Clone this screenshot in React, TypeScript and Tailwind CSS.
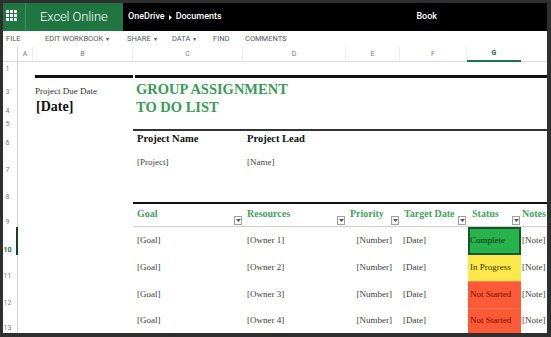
const SERIF = "font-['Liberation_Serif','Times_New_Roman',serif]"
const UI = "font-['Roboto','Open_Sans',sans-serif]"

// Excel row number -> grid row (grid row 1 holds the column letters)
const ROW: Record<number, string> = {
  1: 'row-start-2',
  2: 'row-start-3',
  3: 'row-start-4',
  4: 'row-start-5',
  5: 'row-start-6',
  6: 'row-start-7',
  7: 'row-start-8',
  8: 'row-start-9',
  9: 'row-start-10',
  10: 'row-start-11',
  11: 'row-start-12',
  12: 'row-start-13',
  13: 'row-start-14',
}

const COLS = [
  { key: 'A', cls: 'col-start-2' },
  { key: 'B', cls: 'col-start-3' },
  { key: 'C', cls: 'col-start-4' },
  { key: 'D', cls: 'col-start-5' },
  { key: 'E', cls: 'col-start-6' },
  { key: 'F', cls: 'col-start-7' },
  { key: 'G', cls: 'col-start-8' },
]

const MENU = [
  { label: 'FILE', w: 'w-[39px]' },
  { label: 'EDIT WORKBOOK', caret: true, w: 'w-[82px]' },
  { label: 'SHARE', caret: true, w: 'w-[45px]' },
  { label: 'DATA', caret: true, w: 'w-[41px]' },
  { label: 'FIND', w: 'w-[32px]' },
  { label: 'COMMENTS', w: 'w-[60px]' },
]

const HEADERS = [
  { label: 'Goal', cls: 'col-start-4 pl-[4px]', filter: true },
  { label: 'Resources', cls: 'col-start-5 pl-[4px]', filter: true },
  { label: 'Priority', cls: 'col-start-6 pl-[4px]', filter: true },
  { label: 'Target Date', cls: 'col-start-7 pl-[4px]', filter: true },
  { label: 'Status', cls: 'col-start-8 pl-[5px]', filter: true },
  { label: 'Notes', cls: 'col-start-9 pl-[1px]', filter: false },
]

type Status = 'Complete' | 'In Progress' | 'Not Started'

const TASKS: { row: number; owner: string; status: Status }[] = [
  { row: 10, owner: '[Owner 1]', status: 'Complete' },
  { row: 11, owner: '[Owner 2]', status: 'In Progress' },
  { row: 12, owner: '[Owner 3]', status: 'Not Started' },
  { row: 13, owner: '[Owner 4]', status: 'Not Started' },
]

const STATUS_CLS: Record<Status, string> = {
  Complete: 'bg-[#27b24b] text-[#0c2a12] border-2 border-[#17552b]',
  'In Progress': 'bg-[#fde84b] text-[#3d3300] pl-[2px]',
  'Not Started': 'bg-[#ff5a37] text-[#6e0e00] pl-[2px] border-t border-[#ff7b5e]',
}

function Waffle() {
  return (
    <svg width="11" height="11" viewBox="0 0 11 11" fill="#fff">
      {[0, 4, 8].flatMap((y) =>
        [0, 4, 8].map((x) => <rect key={`${x}-${y}`} x={x} y={y} width="3" height="3" />),
      )}
    </svg>
  )
}

function Filter() {
  return (
    <span className="mb-[2px] mr-[1px] flex h-[9px] w-[8px] shrink-0 items-center justify-center self-end border border-[#a0a0a0] bg-white">
      <svg width="5" height="3" viewBox="0 0 5 3">
        <path d="M0 0h5L2.5 3z" fill="#555" />
      </svg>
    </span>
  )
}

function TopBar() {
  return (
    <div className={`flex h-[28px] shrink-0 ${UI}`}>
      <div className="flex w-[120px] bg-[#1f7641]">
        <div className="flex w-[23px] border-r border-[#3f8f5c] pl-[3px] pt-[7px]">
          <Waffle />
        </div>
        <div className="flex items-center pl-[14px] text-[13px] font-light tracking-[-0.1px] text-white">
          Excel Online
        </div>
      </div>
      <div className="flex flex-1 items-center bg-black pl-[5px] text-[9px] font-medium text-white">
        <span>OneDrive</span>
        <svg className="mx-[4px]" width="3" height="5" viewBox="0 0 3 5">
          <path d="M0 0l3 2.5L0 5z" fill="#fff" />
        </svg>
        <span>Documents</span>
        <span className="ml-auto mr-[110px]">Book</span>
      </div>
    </div>
  )
}

function Ribbon() {
  return (
    <div className={`flex h-[16px] shrink-0 items-center pl-[3px] text-[7.5px] text-[#555] ${UI}`}>
      {MENU.map((m) => (
        <span key={m.label} className={`${m.w} shrink-0 whitespace-nowrap`}>
          {m.label}
          {m.caret && <span className="ml-[3px] text-[6px]">▾</span>}
        </span>
      ))}
    </div>
  )
}

function Sheet() {
  return (
    <div className="grid flex-1 grid-cols-[15px_15px_100px_110px_103px_54px_67px_54px_1fr] grid-rows-[15px_12px_6px_17px_19px_13px_19px_27px_27px_25px_28px_26px_27px_25px]">
      {/* column letters */}
      <div className="col-start-1 row-start-1 border-b border-r border-[#d9d9d9]" />
      {COLS.map((c) => {
        const sel = c.key === 'G'
        return (
          <div
            key={c.key}
            className={`${c.cls} row-start-1 flex items-center justify-center ${UI} text-[7px] ${
              sel
                ? 'border-b-2 border-[#217346] font-bold text-[#1d5e33]'
                : 'border-b border-r border-b-[#dcdcdc] border-r-[#eeeeee] text-[#777]'
            }`}
          >
            {c.key}
          </div>
        )
      })}
      <div className="col-start-9 row-start-1 border-b border-[#dcdcdc]" />

      {/* row numbers */}
      {Array.from({ length: 13 }, (_, i) => i + 1).map((n) => {
        const sel = n === 10
        return (
          <div
            key={n}
            className={`col-start-1 ${ROW[n]} flex items-end overflow-hidden pb-[1px] ${UI} ${
              sel ? 'border-r-2 border-[#17412a]' : 'border-r border-[#d0d0d0]'
            }`}
          >
            {n !== 2 && (
              <span
                className={`w-[9px] text-center text-[7px] leading-[8px] ${
                  sel ? 'font-bold text-[#1d6b3a]' : 'text-[#7a7a7a]'
                }`}
              >
                {n}
              </span>
            )}
          </div>
        )
      })}

      {/* row 2: heavy rules */}
      <div className={`col-start-3 ${ROW[2]} pl-[2px] pt-[1px]`}>
        <div className="h-[3px] bg-[#111]" />
      </div>
      <div className={`col-start-4 col-end-10 ${ROW[2]} pl-[2px] pt-[1px]`}>
        <div className="h-[3px] bg-[#111]" />
      </div>

      {/* rows 3-4: title block */}
      <div className={`col-start-3 ${ROW[3]} flex items-end pb-[1px] pl-[2px] ${SERIF} text-[9px] leading-[10px] text-[#333]`}>
        Project Due Date
      </div>
      <div className={`col-start-4 col-end-10 ${ROW[3]} flex items-center whitespace-nowrap pl-[3px] ${SERIF} text-[14.5px] font-bold leading-[16px] text-[#3a9a58]`}>
        GROUP ASSIGNMENT
      </div>
      <div className={`col-start-3 ${ROW[4]} flex items-center pl-[3px] ${SERIF} text-[14px] font-bold leading-[16px] text-[#111]`}>
        [Date]
      </div>
      <div className={`col-start-4 col-end-10 ${ROW[4]} flex items-center whitespace-nowrap pl-[3px] ${SERIF} text-[14.5px] font-bold leading-[16px] text-[#3a9a58]`}>
        TO DO LIST
      </div>

      {/* rows 6-7: project info */}
      <div className={`col-start-4 col-end-10 ${ROW[6]} border-t-2 border-[#333]`} />
      <div className={`col-start-4 ${ROW[6]} pl-[4px] pt-[4px] ${SERIF} text-[10.5px] font-bold leading-[12px] text-[#111]`}>
        Project Name
      </div>
      <div className={`col-start-5 ${ROW[6]} pl-[4px] pt-[4px] ${SERIF} text-[10.5px] font-bold leading-[12px] text-[#111]`}>
        Project Lead
      </div>
      <div className={`col-start-4 ${ROW[7]} flex items-center pl-[4px] pt-[2px] ${SERIF} text-[9px] text-[#444]`}>
        [Project]
      </div>
      <div className={`col-start-5 ${ROW[7]} flex items-center pl-[4px] pt-[2px] ${SERIF} text-[9px] text-[#444]`}>
        [Name]
      </div>

      {/* row 9: table header */}
      <div className={`col-start-4 col-end-10 ${ROW[9]} border-b border-t-2 border-b-[#cfcfcf] border-t-[#111]`} />
      {HEADERS.map((h) => (
        <div key={h.label} className={`${h.cls} ${ROW[9]} flex justify-between overflow-hidden pt-[6px]`}>
          <span className={`whitespace-nowrap ${SERIF} text-[10px] font-bold leading-[12px] text-[#47a062]`}>
            {h.label}
          </span>
          {h.filter && <Filter />}
        </div>
      ))}

      {/* rows 10-13: tasks */}
      {TASKS.map((t) => (
        <div key={t.row} className="contents">
          <div className={`col-start-4 ${ROW[t.row]} flex items-center pl-[4px] ${SERIF} text-[9px] text-[#3d3d3d]`}>
            [Goal]
          </div>
          <div className={`col-start-5 ${ROW[t.row]} flex items-center pl-[4px] ${SERIF} text-[9px] text-[#3d3d3d]`}>
            {t.owner}
          </div>
          <div className={`col-start-6 ${ROW[t.row]} flex items-center justify-end pr-[8px] ${SERIF} text-[9px] text-[#3d3d3d]`}>
            [Number]
          </div>
          <div className={`col-start-7 ${ROW[t.row]} flex items-center pl-[3px] ${SERIF} text-[9px] text-[#3d3d3d]`}>
            [Date]
          </div>
          <div className={`col-start-8 ${ROW[t.row]} flex items-center whitespace-nowrap ml-[1px] ${SERIF} text-[9px] ${STATUS_CLS[t.status]}`}>
            {t.status}
          </div>
          <div className={`col-start-9 ${ROW[t.row]} flex items-center whitespace-nowrap pl-[1px] ${SERIF} text-[9px] text-[#3d3d3d]`}>
            [Note]
          </div>
        </div>
      ))}
    </div>
  )
}

export default function App() {
  return (
    <div className="h-[337px] w-[551px] overflow-hidden bg-[#2f2f2f] pb-[4px] pl-[3px] pr-[4px] pt-[3px]">
      <div className="flex h-full flex-col bg-white">
        <TopBar />
        <Ribbon />
        <Sheet />
      </div>
    </div>
  )
}
